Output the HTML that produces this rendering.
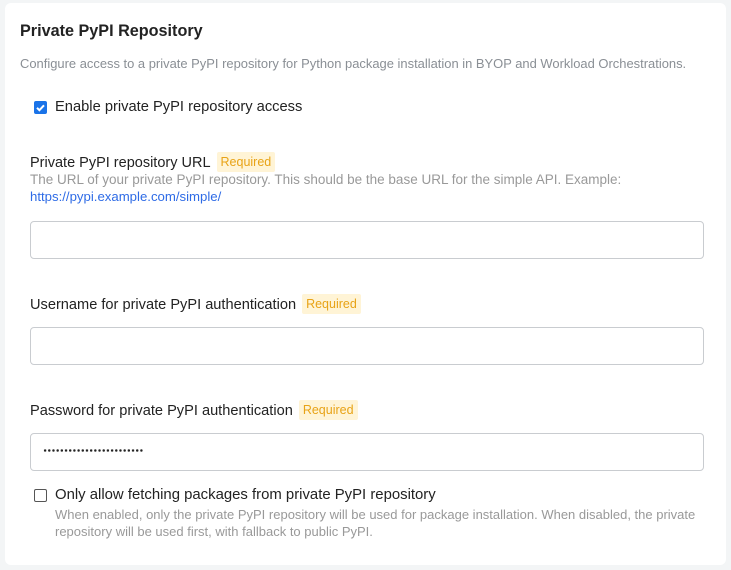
<!DOCTYPE html>
<html><head><meta charset="utf-8"><style>
*{margin:0;padding:0;box-sizing:border-box}
body{width:731px;height:570px;background:#f3f5f6;font-family:"Liberation Sans",sans-serif;position:relative;overflow:hidden;color:#1f2328}
.card{position:absolute;left:5px;top:3px;width:721px;height:562px;background:#fff;border-radius:6px}
.a{position:absolute;white-space:nowrap}
.req{display:inline-block;background:#fff4d6;color:#e8a317;font-size:12.5px;padding:3px 4px;border-radius:2px;margin-left:6px;vertical-align:1px}
.inp{position:absolute;left:30px;width:674px;height:38px;border:1px solid #c9ccd0;border-radius:4px;background:#fff}
.help{color:#999;font-size:13px}
.dots{position:absolute;left:43px;top:449px;width:101px;height:3px;background:radial-gradient(circle,#222 1.1px,transparent 1.4px) 0 0/4.2px 3px repeat-x}
</style></head><body>
<div class="card"></div>
<div class="a" style="left:20px;top:22px;font-size:16.2px;font-weight:bold;color:#222">Private PyPI Repository</div>
<div class="a" style="left:20px;top:56px;font-size:12.95px;color:#8a8f95">Configure access to a private PyPI repository for Python package installation in BYOP and Workload Orchestrations.</div>
<div class="a" style="left:34px;top:101px;width:13px;height:13px;background:#1a73e8;border-radius:2px"><svg width="13" height="13" viewBox="0 0 13 13"><path d="M3 6.8l2.4 2.4L10 4.3" stroke="#fff" stroke-width="2" fill="none"/></svg></div>
<div class="a" style="left:55px;top:99px;font-size:14.7px;color:#222">Enable private PyPI repository access</div>
<div class="a" style="left:30px;top:152px;font-size:14.5px;color:#222">Private PyPI repository URL<span class="req">Required</span></div>
<div class="a help" style="left:30px;top:172px;font-size:13.5px">The URL of your private PyPI repository. This should be the base URL for the simple API. Example:</div>
<div class="a" style="left:30px;top:189px;font-size:13.2px;color:#2e6be6">https://pypi.example.com/simple/</div>
<div class="inp" style="top:221px"></div>
<div class="a" style="left:30px;top:294px;font-size:14.6px;color:#222">Username for private PyPI authentication<span class="req">Required</span></div>
<div class="inp" style="top:327px"></div>
<div class="a" style="left:30px;top:400px;font-size:14.6px;color:#222">Password for private PyPI authentication<span class="req">Required</span></div>
<div class="inp" style="top:433px"></div>
<div class="dots"></div>
<div class="a" style="left:34px;top:489px;width:13px;height:13px;border:1px solid #555;border-radius:2px"></div>
<div class="a" style="left:55px;top:487px;font-size:14.9px;color:#222">Only allow fetching packages from private PyPI repository</div>
<div class="a help" style="left:55px;top:507px">When enabled, only the private PyPI repository will be used for package installation. When disabled, the private</div>
<div class="a help" style="left:55px;top:524px">repository will be used first, with fallback to public PyPI.</div>
</body></html>
